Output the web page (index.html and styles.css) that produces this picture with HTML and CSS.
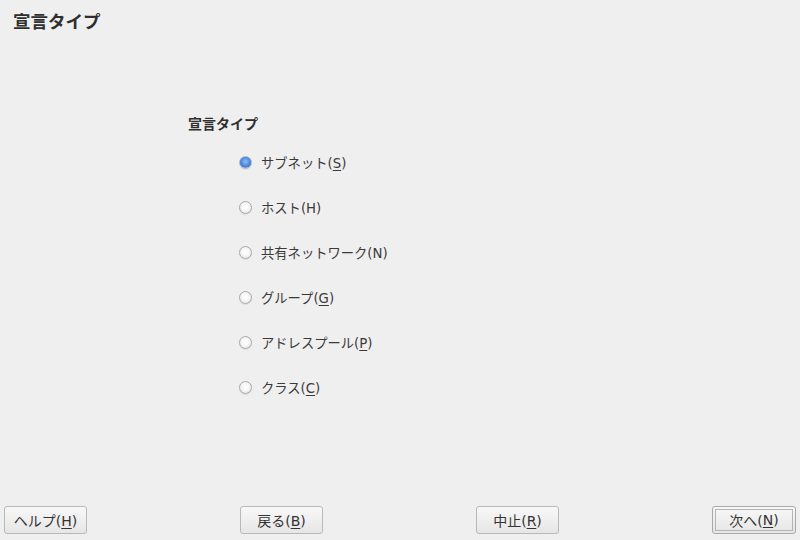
FILE: index.html
```html
<!DOCTYPE html>
<html lang="ja">
<head>
<meta charset="utf-8">
<link rel="stylesheet" href="styles.css">
</head>
<body>
<div class="window">
  <h1 class="title">宣言タイプ</h1>
  <div class="content">
    <div class="group">
      <div class="group-label">宣言タイプ</div>
      <div class="options">
        <label class="option"><span class="radio checked"></span><span class="text">サブネット(<u>S</u>)</span></label>
        <label class="option"><span class="radio"></span><span class="text">ホスト(H)</span></label>
        <label class="option"><span class="radio"></span><span class="text">共有ネットワーク(N)</span></label>
        <label class="option"><span class="radio"></span><span class="text">グループ(<u>G</u>)</span></label>
        <label class="option"><span class="radio"></span><span class="text">アドレスプール(<u>P</u>)</span></label>
        <label class="option"><span class="radio"></span><span class="text">クラス(<u>C</u>)</span></label>
      </div>
    </div>
  </div>
  <div class="buttons">
    <button class="btn">ヘルプ(<u>H</u>)</button>
    <button class="btn">戻る(<u>B</u>)</button>
    <button class="btn">中止(<u>R</u>)</button>
    <button class="btn default"><span class="inner">次へ(<u>N</u>)</span></button>
  </div>
</div>
</body>
</html>
```

FILE: styles.css
```css
html, body {
  margin: 0;
  padding: 0;
  background: #efefef;
}
body {
  font-family: "DejaVu Sans", "Noto Sans CJK JP", sans-serif;
  color: #333;
}
.window {
  width: 800px;
  height: 540px;
  display: flex;
  flex-direction: column;
  box-sizing: border-box;
}
.title {
  margin: 0;
  padding: 9px 0 0 13px;
  font-family: "Noto Sans", "Noto Sans CJK JP", sans-serif;
  font-size: 17.5px;
  font-weight: bold;
  line-height: 24px;
  color: #2e2e2e;
}
.content {
  flex: 1;
  padding: 81px 0 0 188px;
}
.group-label {
  font-family: "Noto Sans", "Noto Sans CJK JP", sans-serif;
  font-size: 14px;
  font-weight: bold;
  line-height: 20px;
  color: #2e2e2e;
}
.options {
  display: flex;
  flex-direction: column;
  gap: 25px;
  padding: 18px 0 0 51px;
}
.option {
  display: flex;
  align-items: center;
  height: 20px;
  font-size: 13.3px;
  color: #3a3a3a;
}
.option u, .btn u {
  text-decoration: underline;
  text-underline-offset: 2px;
}
.radio {
  width: 13px;
  height: 13px;
  border-radius: 50%;
  box-sizing: border-box;
  border: 1px solid #a9a9a9;
  background: radial-gradient(circle at 50% 45%, #ffffff 0%, #f7f7f7 45%, #dadada 100%);
  margin-right: 9px;
  box-shadow: 0 1px 1px rgba(0,0,0,0.08);
}
.radio.checked {
  border-color: #aab6c4;
  background: radial-gradient(circle at 50% 42%, #8fbdf6 0%, #5a95e6 40%, #3f78d2 68%, #d6dfeb 76%, #eef1f5 100%);
}
.buttons {
  display: flex;
  justify-content: space-between;
  padding: 0 4px 6px 4px;
}
.btn {
  width: 83px;
  height: 28px;
  box-sizing: border-box;
  border: 1px solid #b8b8b8;
  border-radius: 3px;
  background: linear-gradient(#f8f8f8, #e6e6e6);
  font-family: "DejaVu Sans", "Noto Sans CJK JP", sans-serif;
  font-size: 14px;
  color: #333;
  padding: 0;
}
.btn.default {
  width: 84px;
  padding: 2px;
  border-color: #a8a8a8;
}
.btn.default .inner {
  display: flex;
  align-items: center;
  justify-content: center;
  height: 100%;
  border: 1px solid #b4b4b4;
  box-sizing: border-box;
}
```
